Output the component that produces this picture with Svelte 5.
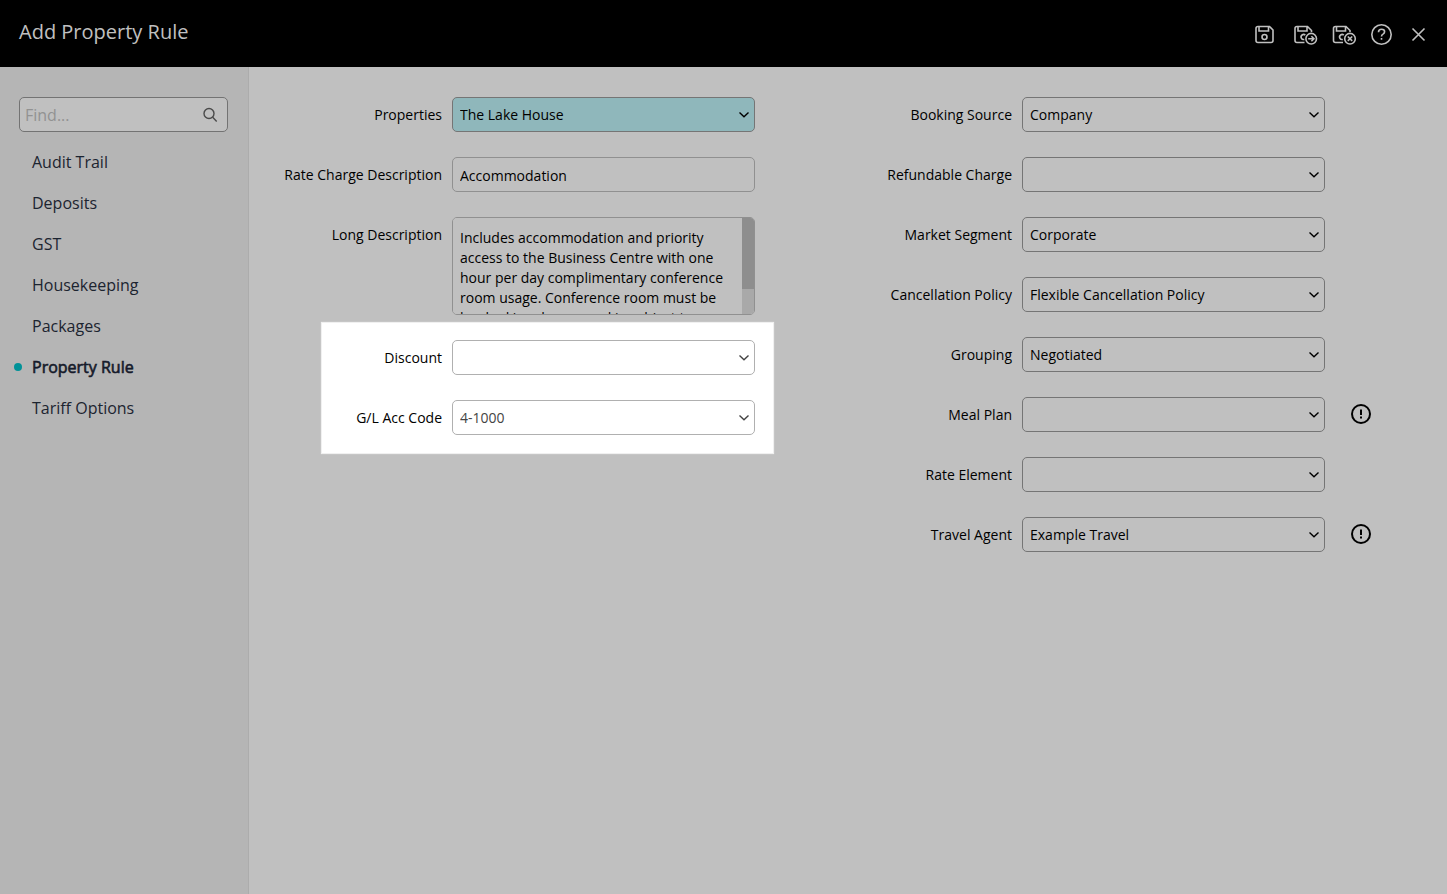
<script lang="ts">
  interface Field {
    id: string;
    label: string;
    value: string;
    info?: boolean;
  }

  const MENU = ['Audit Trail', 'Deposits', 'GST', 'Housekeeping', 'Packages', 'Property Rule', 'Tariff Options'];

  const ACCOUNTING: Field[] = [
    { id: 'discount', label: 'Discount', value: '' },
    { id: 'gl-code',  label: 'G/L Acc Code', value: '4-1000' },
  ];

  const RULES: Field[] = [
    { id: 'source',       label: 'Booking Source', value: 'Company' },
    { id: 'refundable',   label: 'Refundable Charge', value: '' },
    { id: 'segment',      label: 'Market Segment', value: 'Corporate' },
    { id: 'cancellation', label: 'Cancellation Policy', value: 'Flexible Cancellation Policy' },
    { id: 'grouping',     label: 'Grouping', value: 'Negotiated' },
    { id: 'meal-plan',    label: 'Meal Plan', value: '', info: true },
    { id: 'element',      label: 'Rate Element', value: '' },
    { id: 'agent',        label: 'Travel Agent', value: 'Example Travel', info: true },
  ];

  let active = $state('Property Rule');
  let search = $state('');
  let description = $state('Accommodation');
  let longDescription = $state(
    'Includes accommodation and priority access to the Business Centre with one hour per day complimentary conference room usage. Conference room must be booked in advance and is subject to availability.'
  );

  // custom scrollbar, in percent of the track
  let thumb = $state({ top: 0, size: 74 });

  function syncThumb(event: Event) {
    const el = event.currentTarget as HTMLTextAreaElement;
    thumb.top  = (el.scrollTop / el.scrollHeight) * 100;
    thumb.size = (el.clientHeight / el.scrollHeight) * 100;
  }
</script>

{#snippet selectRow(field: Field, accent = false)}
  <div class="row">
    <label for={field.id}>{field.label}</label>
    <div class="control">
      <select id={field.id} class:accent>
        <option>{field.value}</option>
      </select>
      <svg class="chevron" viewBox="0 0 12 8" aria-hidden="true"><path d="M1.500 1.500 6 5.700l4.500-4.200" /></svg>
    </div>
    {#if field.info}
      <button class="info" aria-label="{field.label} information">
        <svg viewBox="0 0 20 20">
          <circle cx="10" cy="10" r="9" />
          <path d="M10 5.500v5.500M10 12.600v2" />
        </svg>
      </button>
    {/if}
  </div>
{/snippet}

<div class="page">
  <header>
    <h1>Add Property Rule</h1>
    <div class="toolbar">
      <button aria-label="Save">
        <svg viewBox="0 0 24 24">
          <path d="M3 4.500h11.500L18 8v10.500q0 2-2 2H3q-2 0-2-2v-12q0-2 2-2zM4 4.500v4.500h9.500V4.500" />
          <circle cx="9.500" cy="15" r="2.500" />
        </svg>
      </button>
      <button aria-label="Save and continue">
        <svg viewBox="0 0 24 24">
          <path d="M10.500 20.500H3q-2 0-2-2v-12q0-2 2-2h10.500L17.500 8.500v1.500M4 4.500v4.500h9V4.500M11.300 13.200a2.500 2.500 0 1 0-1 4.200" />
          <circle cx="17.200" cy="16.700" r="5.300" />
          <path d="M14.200 16.700h5.500M17.400 14.200l2.500 2.500-2.500 2.500" />
        </svg>
      </button>
      <button aria-label="Save and exit">
        <svg viewBox="0 0 24 24">
          <path d="M10 20.500H2.500q-2 0-2-2v-12q0-2 2-2h10.500L17 8.500v1.500M3.500 4.500v4.500h9V4.500M10.800 13.200a2.500 2.500 0 1 0-1 4.200" />
          <circle cx="17" cy="16.700" r="5.300" />
          <path d="m14.800 14.500 4.400 4.400m0-4.400-4.400 4.400" />
        </svg>
      </button>
      <button aria-label="Help">
        <svg viewBox="0 0 24 24">
          <circle cx="9.500" cy="12.500" r="9.700" />
          <path d="M6.500 10.200q0-2.900 3.100-2.900 3 0 3 2.500 0 1.400-1.600 2.300-1.500.8-1.500 2.300M9.500 16v1.800" />
        </svg>
      </button>
      <button aria-label="Close">
        <svg viewBox="0 0 24 24"><path d="m1.500 6.500 12 12m0-12-12 12" /></svg>
      </button>
    </div>
  </header>

  <div class="body">
    <aside>
      <div class="search">
        <input type="text" placeholder="Find..." aria-label="Find" bind:value={search} />
        <svg viewBox="0 0 16 16" aria-hidden="true">
          <circle cx="7" cy="6.500" r="5" />
          <path d="m10.700 10.200 4 4.300" />
        </svg>
      </div>
      <nav>
        {#each MENU as item}
          <a href="#{item.toLowerCase().replace(' ', '-')}" class:active={item === active} onclick={() => (active = item)}>{item}</a>
        {/each}
      </nav>
    </aside>

    <main>
      <div class="column">
        {@render selectRow({ id: 'properties', label: 'Properties', value: 'The Lake House' }, true)}
        <div class="row">
          <label for="description">Rate Charge Description</label>
          <input id="description" type="text" bind:value={description} />
        </div>
        <div class="row">
          <label for="long">Long Description</label>
          <div class="control">
            <textarea id="long" bind:value={longDescription} onscroll={syncThumb} oninput={syncThumb}></textarea>
            <div class="track" aria-hidden="true">
              <div class="thumb" style="top: {thumb.top}%; height: {thumb.size}%"></div>
            </div>
          </div>
        </div>
        <div class="spotlight">
          {#each ACCOUNTING as field}
            {@render selectRow(field)}
          {/each}
        </div>
      </div>

      <div class="column">
        {#each RULES as field}
          {@render selectRow(field)}
        {/each}
      </div>
    </main>
  </div>
</div>

<style>
  :global(body) {
    margin: 0;
    background: #c0c0c0;
  }

  .page {
    min-height: 100vh;
    display: flex;
    flex-direction: column;
    font-family: "Open Sans", "Noto Sans", sans-serif;
    font-size: 14px;
    line-height: 20px;
    color: #000;
  }

  .page * { box-sizing: border-box; }

  svg {
    display: block;
    fill: none;
    stroke: currentColor;
  }

  button {
    padding: 0;
    border: 0;
    background: none;
    color: inherit;
    cursor: pointer;
  }

  input, select, textarea {
    width: 100%;
    height: 35px;
    margin: 0;
    padding: 0 7px;
    border: 1px solid #909090;
    border-radius: 5px;
    background: #c0c0c0;
    color: #000;
    font: inherit;
  }

  /* header */

  header {
    display: flex;
    justify-content: space-between;
    align-items: center;
    height: 67px;
    padding: 0 12px 0 19px;
    background: #000;
    color: #c0c0c0;
  }

  h1 {
    margin: 0;
    padding-bottom: 4px;
    font-size: 20px;
    line-height: 28px;
    font-weight: 400;
  }

  .toolbar {
    display: flex;
    gap: 15px;
  }

  .toolbar svg {
    width: 24px;
    height: 24px;
    stroke-width: 1.6;
    overflow: visible;
  }

  /* sidebar */

  .body {
    flex: 1;
    display: flex;
  }

  aside {
    flex: 0 0 249px;
    padding: 30px 20px 30px 19px;
    background: #b5b5b5;
    border-right: 1px solid #acacac;
  }

  .search {
    position: relative;
    margin-bottom: 10px;
  }

  .search input {
    padding: 0 32px 0 5px;
    border-color: #737373;
    font-size: 16px;
  }

  .search input::placeholder {
    color: #929292;
    opacity: 1;
  }

  .search svg {
    position: absolute;
    top: 10px;
    right: 10px;
    width: 16px;
    height: 16px;
    color: #4a4a4a;
    stroke-width: 1.4;
  }

  nav a {
    position: relative;
    display: block;
    padding-left: 13px;
    font-size: 16px;
    line-height: 41px;
    color: #1c2430;
    text-decoration: none;
  }

  nav a.active {
    color: #161a2a;
    -webkit-text-stroke: 0.6px currentColor;
  }

  nav a.active::before {
    content: '';
    position: absolute;
    left: -5px;
    top: 16px;
    width: 8px;
    height: 8px;
    border-radius: 50%;
    background: #009298;
  }

  /* form */

  main {
    flex: 1;
    display: grid;
    grid-template-columns: repeat(2, minmax(0, 1fr));
    align-items: start;
    padding: 30px 58px 30px 0;
  }

  .column, .spotlight {
    display: grid;
    gap: 25px;
  }

  .column {
    --label: 203px;
    --aside: 64px;
  }

  .row {
    display: grid;
    grid-template-columns: var(--label) minmax(0, 1fr) var(--aside);
    align-items: start;
  }

  .row input { padding-top: 2px; }

  label {
    padding-right: 10px;
    line-height: 35px;
    text-align: right;
    white-space: nowrap;
  }

  .control {
    position: relative;
  }

  select {
    display: block;
    appearance: none;
    border-color: #757575;
  }

  select.accent { background: #8fb7bb; }

  .chevron {
    position: absolute;
    top: 14px;
    right: 5px;
    width: 12px;
    height: 8px;
    stroke-width: 1.4;
    pointer-events: none;
  }

  textarea {
    display: block;
    height: 98px;
    padding: 10px 19px 0 7px;
    resize: none;
    overflow-y: scroll;
    scrollbar-width: none;
  }

  .track {
    position: absolute;
    top: 1px;
    right: 1px;
    bottom: 1px;
    width: 12px;
    border-radius: 0 4px 4px 0;
    background: #a9a9a9;
    overflow: hidden;
    pointer-events: none;
  }

  .thumb {
    position: absolute;
    width: 100%;
    background: #8e8e8e;
  }

  .info {
    margin: 7px 0 0 26px;
    width: 20px;
    height: 20px;
  }

  .info svg { stroke-width: 2; }

  .spotlight {
    --label: 130px;
    --aside: 18px;
    margin: -18px 45px 0 72px;
    padding: 17px 0 18px;
    border: 1px solid #f0f0f0;
    background: #fff;
    box-shadow: 0 0 1px #e8e8e8;
  }

  .spotlight select {
    border-color: #b0b0b0;
    background: #fff;
    color: #444;
  }

  .spotlight .chevron { color: #444; }
</style>
